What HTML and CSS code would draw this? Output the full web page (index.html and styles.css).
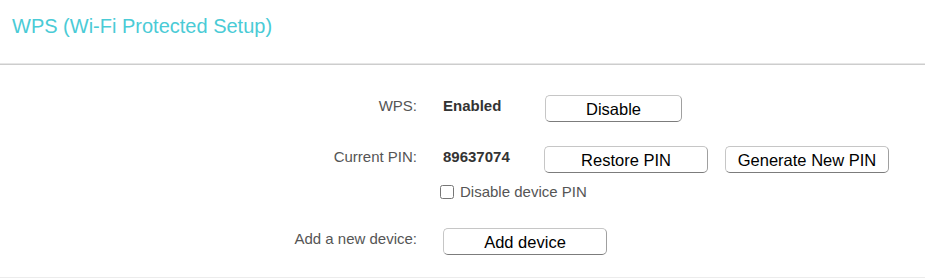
FILE: index.html
```html
<!DOCTYPE html>
<html lang="en">
<head>
  <meta charset="UTF-8" />
  <meta name="viewport" content="width=device-width, initial-scale=1.0"/>
  <title>WPS</title>
  <link rel="stylesheet" href="styles.css">
</head>
<body>
  <div class="cabecalho">
    <h2>WPS (Wi-Fi Protected Setup)</h2>
  </div>

  <div class="painel">
    <div class="linha">
      <div class="rotulo">WPS:</div>
      <div class="valor">Enabled</div>
      <button class="botao curto">Disable</button>
    </div>

    <div class="linha">
      <div class="rotulo">Current PIN:</div>
      <div class="valor">89637074</div>
      <button class="botao">Restore PIN</button>
      <button class="botao">Generate New PIN</button>
    </div>

    <div class="linha marcador">
      <div class="rotulo"></div>
      <label class="opcao">
        <input type="checkbox" id="desativarPin">
        <span>Disable device PIN</span>
      </label>
    </div>

    <div class="linha ultima">
      <div class="rotulo">Add a new device:</div>
      <button class="botao">Add device</button>
    </div>
  </div>
</body>
</html>
```

FILE: styles.css
```css
body {
  margin: 0;
  font-family: 'Liberation Sans', Arial, sans-serif;
  background: #fff;
  color: #555;
}
.cabecalho {
  padding: 15px 12px 26px;
  border-bottom: 1px solid #cdcdcd;
  box-shadow: inset 0 -1px 0 #e6e6e6;
}
.cabecalho h2 {
  margin: 0;
  font-size: 20px;
  line-height: 23px;
  font-weight: normal;
  color: #4acbd6;
}
.painel {
  padding: 30px 0 22px;
  border-bottom: 1px solid #ececec;
}
.linha {
  display: flex;
  align-items: flex-start;
  margin-top: 24px;
}
.linha:first-child {
  margin-top: 0;
}
.rotulo {
  width: 417px;
  margin-right: 26px;
  padding-top: 2px;
  text-align: right;
  font-size: 15px;
  line-height: 17px;
  color: #555;
}
.valor {
  width: 101px;
  padding-top: 2px;
  font-size: 15px;
  line-height: 17px;
  font-weight: bold;
  color: #333;
}
.botao {
  width: 164px;
  height: 27px;
  margin: 0 17px 0 0;
  padding: 0;
  background: #fff;
  border: 1px solid #c6c6c6;
  border-right-color: #a0a0a0;
  border-bottom-color: #7c7c7c;
  border-radius: 5px;
  font-family: 'Liberation Sans', Arial, sans-serif;
  font-size: 16.5px;
  line-height: 18px;
  color: #000;
  cursor: pointer;
}
.botao.curto {
  width: 137px;
  margin-left: 1px;
}
.linha.marcador {
  margin-top: 10px;
}
.marcador .rotulo {
  padding-top: 0;
}
.opcao {
  display: flex;
  align-items: center;
  font-size: 15px;
  line-height: 17px;
  color: #555;
}
.opcao input {
  width: 14px;
  height: 14px;
  margin: 0 6px 0 -3px;
}
.linha.ultima {
  margin-top: 28px;
}
```
